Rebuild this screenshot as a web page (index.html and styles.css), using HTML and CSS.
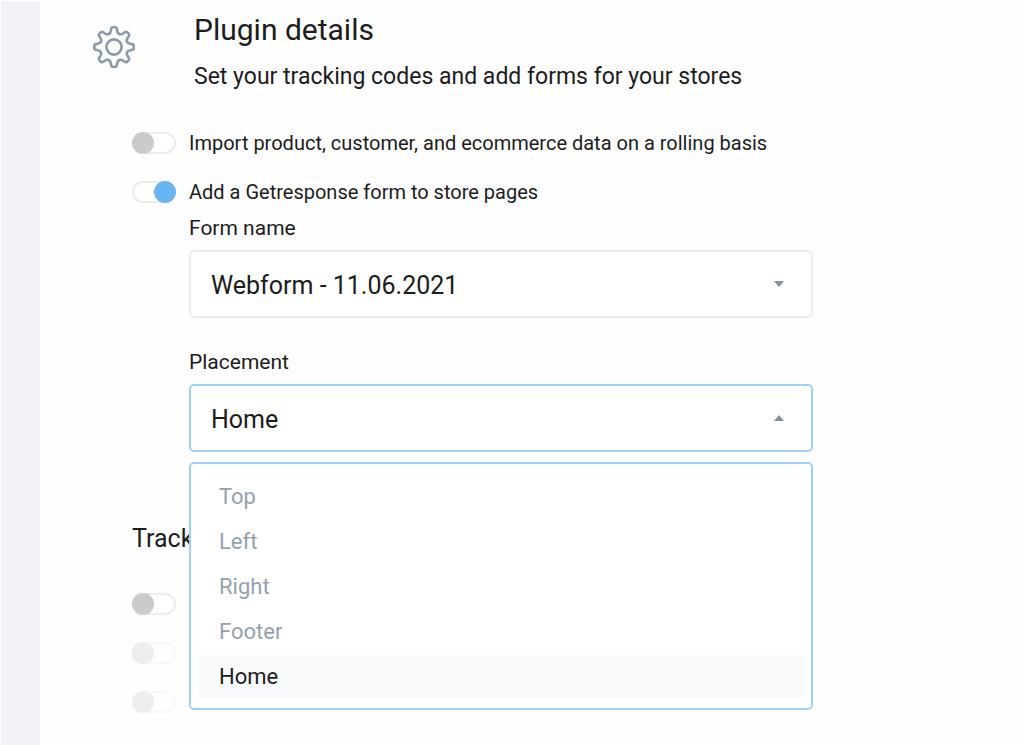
FILE: index.html
```html
<!DOCTYPE html>
<html lang="en">
<head>
<meta charset="utf-8">
<meta name="viewport" content="width=device-width, initial-scale=1">
<title>Plugin details</title>
<link rel="stylesheet" href="styles.css">
</head>
<body>
<div class="layout">
  <aside class="rail"></aside>
  <main class="content">
    <header class="intro">
      <svg class="gear" viewBox="-22 -22 44 44" fill="none" stroke="currentColor" stroke-width="2.6" stroke-linecap="round" stroke-linejoin="round" aria-hidden="true">
        <defs>
          <path id="tooth" d="M-5.4 -13C-3.9 -13.6 -3.4 -14.4 -3.2 -16L-2.9 -18C-2.7 -19.2 -2.2 -19.7 -1.2 -19.7H1.2C2.2 -19.7 2.7 -19.2 2.9 -18L3.2 -16C3.4 -14.4 3.9 -13.6 5.4 -13"/>
        </defs>
        <circle r="7.6"/>
        <use href="#tooth"/>
        <use href="#tooth" transform="rotate(45)"/>
        <use href="#tooth" transform="rotate(90)"/>
        <use href="#tooth" transform="rotate(135)"/>
        <use href="#tooth" transform="rotate(180)"/>
        <use href="#tooth" transform="rotate(225)"/>
        <use href="#tooth" transform="rotate(270)"/>
        <use href="#tooth" transform="rotate(315)"/>
      </svg>
      <div>
        <h1 class="title">Plugin details</h1>
        <p class="subtitle">Set your tracking codes and add forms for your stores</p>
      </div>
    </header>

    <form class="settings">
      <label class="option">
        <input class="switch" type="checkbox" role="switch">
        <span>Import product, customer, and ecommerce data on a rolling basis</span>
      </label>
      <label class="option">
        <input class="switch" type="checkbox" role="switch" checked>
        <span>Add a Getresponse form to store pages</span>
      </label>

      <div class="fields">
        <div class="field">
          <label class="field-label" for="form-name">Form name</label>
          <div class="select-wrap">
            <select class="select" id="form-name">
              <option>Webform - 11.06.2021</option>
            </select>
            <svg class="caret" viewBox="0 0 10 6" aria-hidden="true"><path d="M0 0h10L5 6z"/></svg>
          </div>
        </div>
        <div class="field">
          <label class="field-label" id="placement-label" for="placement">Placement</label>
          <div class="select-wrap">
            <select class="select select-open" id="placement">
              <option>Home</option>
            </select>
            <svg class="caret" viewBox="0 0 10 6" aria-hidden="true"><path d="M0 6h10L5 0z"/></svg>
            <ul class="menu" role="listbox" aria-labelledby="placement-label">
              <li class="menu-item" role="option">Top</li>
              <li class="menu-item" role="option">Left</li>
              <li class="menu-item" role="option">Right</li>
              <li class="menu-item" role="option">Footer</li>
              <li class="menu-item menu-item-selected" role="option" aria-selected="true">Home</li>
            </ul>
          </div>
        </div>
      </div>

      <h2 class="section-title" id="track">Track</h2>
      <div class="option"><input class="switch" type="checkbox" role="switch" aria-labelledby="track"></div>
      <div class="option"><input class="switch" type="checkbox" role="switch" aria-labelledby="track" disabled></div>
      <div class="option"><input class="switch" type="checkbox" role="switch" aria-labelledby="track" disabled></div>
    </form>
  </main>
</div>
</body>
</html>
```
FILE: styles.css
```css
* {
  box-sizing: border-box;
}

body {
  margin: 0;
  background: #fefefe;
  color: #1c1c1c;
  font-family: Roboto, "Liberation Sans", sans-serif;
  font-size: 20px;
  line-height: 24px;
}

.layout {
  display: flex;
  min-height: 100vh;
}

.rail {
  flex: 0 0 39px;
  margin: 1px 0 0 1px;
  background: #f2f3f8;
}

.content {
  flex: 1;
  max-width: 864px;
  padding: 12px 91px 0 52px;
}

.intro {
  display: flex;
  gap: 58px;
}

.gear {
  flex: none;
  width: 44px;
  height: 44px;
  margin-top: 13px;
  color: #8a9aaa;
}

.title {
  margin: 0;
  font-size: 30px;
  font-weight: 400;
  line-height: 36px;
}

.subtitle {
  margin: 16px 0 0;
  font-size: 23px;
  line-height: 26px;
}

.settings {
  margin: 41px 0 0 40px;
}

.option {
  display: flex;
  align-items: center;
  gap: 13px;
  height: 24px;
  margin-bottom: 25px;
}

.switch {
  appearance: none;
  flex: none;
  display: flex;
  width: 44px;
  height: 22px;
  margin: 0;
  border-radius: 11px;
  background: #fff;
  box-shadow: inset 0 0 0 2px #ececec;
}

.switch::before {
  content: "";
  width: 22px;
  height: 22px;
  border-radius: 50%;
  background: #cbcbcb;
}

.switch:checked {
  justify-content: flex-end;
}

.switch:checked::before {
  background: #69b5f3;
}

.switch:disabled {
  opacity: 0.3;
}

.fields {
  display: grid;
  gap: 32px;
  margin: -13px 0 0 57px;
}

.field-label {
  display: block;
  margin-bottom: 10px;
  font-size: 21px;
}

.select-wrap {
  position: relative;
}

.select {
  appearance: none;
  display: block;
  width: 100%;
  height: 68px;
  padding: 4px 20px 0;
  border: 2px solid #ececec;
  border-radius: 5px;
  background: #fff;
  color: inherit;
  font: inherit;
  font-size: 25px;
}

.select-open {
  border-color: #9ed1f8;
}

.caret {
  position: absolute;
  top: 31px;
  right: 29px;
  width: 10px;
  height: 6px;
  fill: #8291a3;
}

.menu {
  position: absolute;
  top: 78px;
  left: 0;
  right: 0;
  margin: 0;
  padding: 11px 8px 10px;
  border: 2px solid #9ed1f8;
  border-radius: 5px;
  background: #fff;
  list-style: none;
  font-size: 22px;
}

.menu-item {
  margin-bottom: 2px;
  padding: 9px 20px 8px;
  border-radius: 4px;
  color: #94a1af;
  line-height: 26px;
}

.menu-item-selected {
  margin-bottom: 0;
  background: #f9fafc;
  color: #1c1c1c;
}

.section-title {
  margin: 72px 0 38px;
  font-size: 25px;
  font-weight: 400;
  line-height: 30px;
}
```
